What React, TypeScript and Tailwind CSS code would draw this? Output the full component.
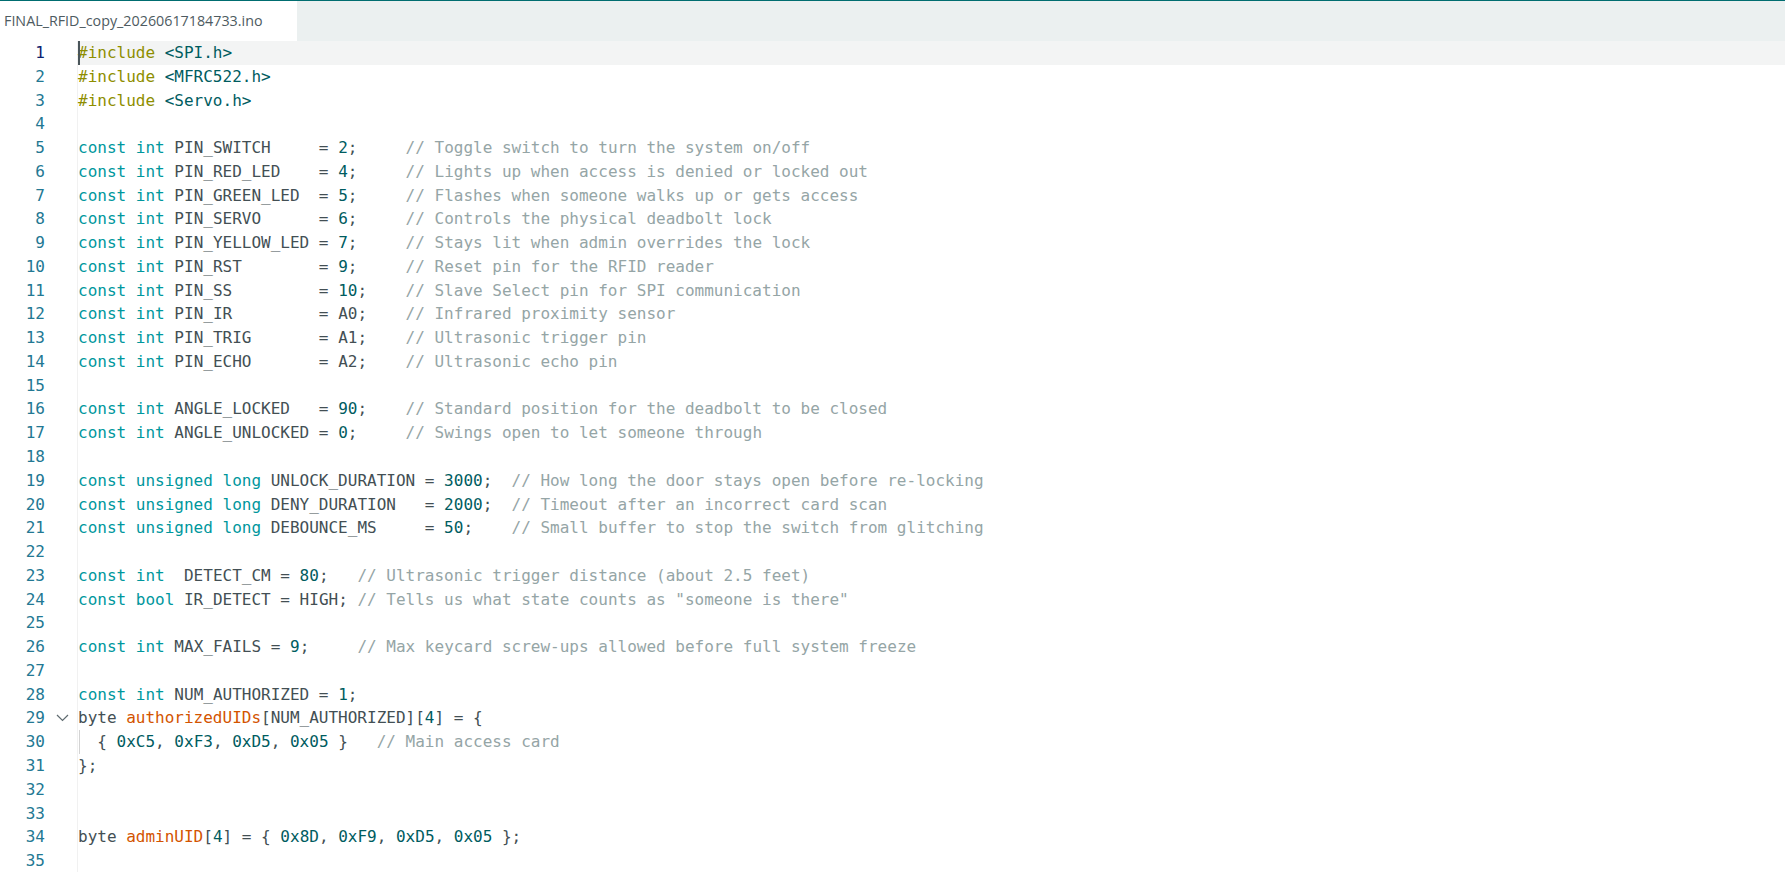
import React from "react";

const CODE: string[] = [
  "#include <SPI.h>",
  "#include <MFRC522.h>",
  "#include <Servo.h>",
  "",
  "const int PIN_SWITCH     = 2;     // Toggle switch to turn the system on/off",
  "const int PIN_RED_LED    = 4;     // Lights up when access is denied or locked out",
  "const int PIN_GREEN_LED  = 5;     // Flashes when someone walks up or gets access",
  "const int PIN_SERVO      = 6;     // Controls the physical deadbolt lock",
  "const int PIN_YELLOW_LED = 7;     // Stays lit when admin overrides the lock",
  "const int PIN_RST        = 9;     // Reset pin for the RFID reader",
  "const int PIN_SS         = 10;    // Slave Select pin for SPI communication",
  "const int PIN_IR         = A0;    // Infrared proximity sensor",
  "const int PIN_TRIG       = A1;    // Ultrasonic trigger pin",
  "const int PIN_ECHO       = A2;    // Ultrasonic echo pin",
  "",
  "const int ANGLE_LOCKED   = 90;    // Standard position for the deadbolt to be closed",
  "const int ANGLE_UNLOCKED = 0;     // Swings open to let someone through",
  "",
  "const unsigned long UNLOCK_DURATION = 3000;  // How long the door stays open before re-locking",
  "const unsigned long DENY_DURATION   = 2000;  // Timeout after an incorrect card scan",
  "const unsigned long DEBOUNCE_MS     = 50;    // Small buffer to stop the switch from glitching",
  "",
  "const int  DETECT_CM = 80;   // Ultrasonic trigger distance (about 2.5 feet)",
  'const bool IR_DETECT = HIGH; // Tells us what state counts as "someone is there"',
  "",
  "const int MAX_FAILS = 9;     // Max keycard screw-ups allowed before full system freeze",
  "",
  "const int NUM_AUTHORIZED = 1;",
  "byte authorizedUIDs[NUM_AUTHORIZED][4] = {",
  "  { 0xC5, 0xF3, 0xD5, 0x05 }   // Main access card",
  "};",
  "",
  "",
  "byte adminUID[4] = { 0x8D, 0xF9, 0xD5, 0x05 };",
  "",
];

const KEYWORDS = ["const", "int", "unsigned", "long", "bool"];
const NAMES = ["authorizedUIDs", "adminUID"];

type Token = { text: string; color: string };

// tiny highlighter, just enough for this sketch
const tokenize = (line: string): Token[] => {
  const out: Token[] = [];
  let rest = line;
  while (rest.length > 0) {
    let m: RegExpMatchArray | null;
    if (rest.startsWith("//")) {
      out.push({ text: rest, color: "#95a5a6" });
      break;
    } else if ((m = rest.match(/^#include/))) {
      out.push({ text: m[0], color: "#8e8e00" });
    } else if ((m = rest.match(/^<[^>]*>/))) {
      out.push({ text: m[0], color: "#005c5f" });
    } else if ((m = rest.match(/^(0x[0-9A-Fa-f]+|\d+)/))) {
      out.push({ text: m[0], color: "#005c5f" });
    } else if ((m = rest.match(/^[A-Za-z_]\w*/))) {
      const w = m[0];
      let color = "#434f54";
      if (KEYWORDS.includes(w)) color = "#00979d";
      else if (NAMES.includes(w)) color = "#d35400";
      out.push({ text: w, color });
    } else {
      m = rest.match(/^\s+|^./) as RegExpMatchArray;
      out.push({ text: m[0], color: "#434f54" });
    }
    rest = rest.slice(m[0].length);
  }
  return out;
};

const CodeLine = ({ num, text }: { num: number; text: string }) => {
  const active = num === 1;
  return (
    <div className="flex h-[23.77px] leading-[23.77px]">
      <div
        className={`w-[45px] shrink-0 text-right ${
          active ? "text-[#0b216f]" : "text-[#237893]"
        }`}
      >
        {num}
      </div>
      <div className="flex w-[32px] shrink-0 items-center justify-center pl-[2px]">
        {num === 29 && (
          <svg width="13" height="8" viewBox="0 0 13 8" fill="none">
            <polyline
              points="1,1 6.5,6.5 12,1"
              stroke="#5f6b70"
              strokeWidth="1.2"
            />
          </svg>
        )}
      </div>
      <div
        className={`relative flex-1 whitespace-pre border-l border-[#f1f1f1] ${
          active ? "bg-[#f3f4f4]" : ""
        }`}
      >
        {active && (
          <span className="absolute left-0 top-0 h-full w-[2px] bg-[#4a555a]" />
        )}
        {num === 30 && (
          <span className="absolute left-[1px] top-0 h-full w-[1px] bg-[#d3d3d3]" />
        )}
        {tokenize(text).map((t, i) => (
          <span key={i} style={{ color: t.color }}>
            {t.text}
          </span>
        ))}
      </div>
    </div>
  );
};

export default function App() {
  return (
    <div className="h-[872px] w-[1785px] overflow-hidden bg-white">
      <div className="flex h-[41px] border-t border-[#006d70] bg-[#ebf0f0]">
        <div className="flex h-full w-[297px] items-center bg-white pl-[4px] pb-[1px] font-['Open_Sans',sans-serif] text-[14.3px] text-[#4e5b61]">
          FINAL_RFID_copy_20260617184733.ino
        </div>
      </div>
      <div className="font-['DejaVu_Sans_Mono',monospace] text-[16px]">
        {CODE.map((line, i) => (
          <CodeLine key={i} num={i + 1} text={line} />
        ))}
      </div>
    </div>
  );
}
